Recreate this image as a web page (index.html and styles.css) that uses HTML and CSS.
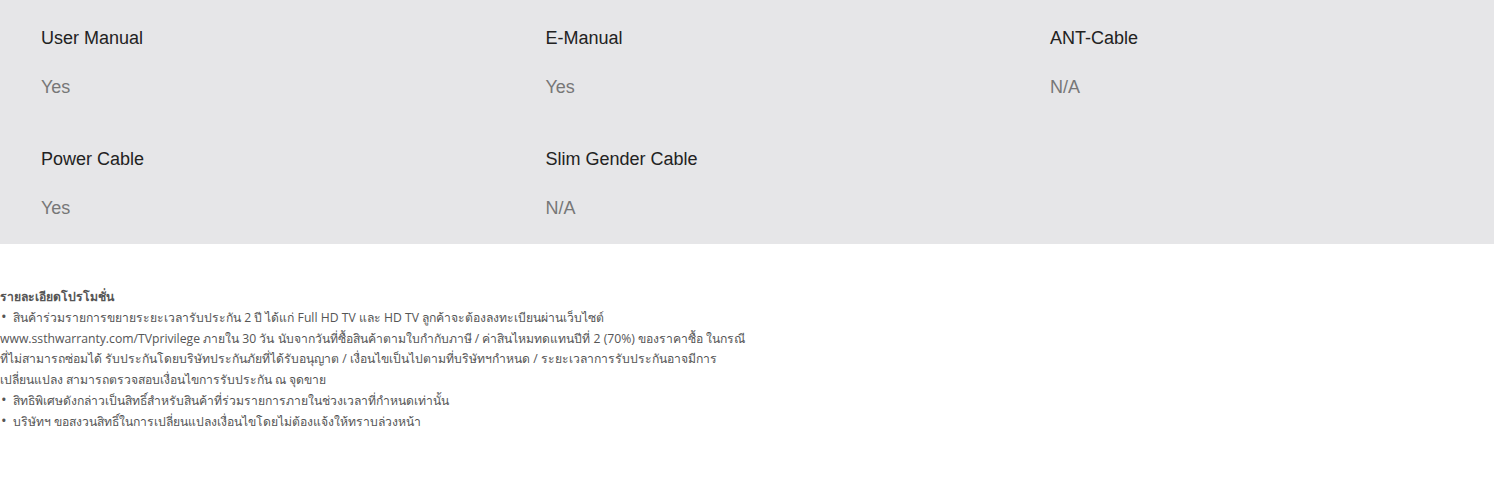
FILE: index.html
```html
<!DOCTYPE html>
<html lang="th">
<head>
    <meta charset="UTF-8">
    <meta name="viewport" content="width=device-width, initial-scale=1.0">
    <title>Specifications</title>
    <link rel="stylesheet" href="styles.css">
</head>
<body>
    <div class="specs">
        <div class="spec">
            <div class="spec-name">User Manual</div>
            <div class="spec-value">Yes</div>
        </div>
        <div class="spec">
            <div class="spec-name">E-Manual</div>
            <div class="spec-value">Yes</div>
        </div>
        <div class="spec">
            <div class="spec-name">ANT-Cable</div>
            <div class="spec-value">N/A</div>
        </div>
        <div class="spec">
            <div class="spec-name">Power Cable</div>
            <div class="spec-value">Yes</div>
        </div>
        <div class="spec">
            <div class="spec-name">Slim Gender Cable</div>
            <div class="spec-value">N/A</div>
        </div>
    </div>

    <div class="promo">
        <p class="promo-title">รายละเอียดโปรโมชั่น</p>
        <p><span class="dot">•</span>&nbsp; สินค้าร่วมรายการขยายระยะเวลารับประกัน 2 ปี ได้แก่ Full HD TV และ HD TV ลูกค้าจะต้องลงทะเบียนผ่านเว็บไซต์<br>
        www.ssthwarranty.com/TVprivilege ภายใน 30 วัน นับจากวันที่ซื้อสินค้าตามใบกำกับภาษี / ค่าสินไหมทดแทนปีที่ 2 (70%) ของราคาซื้อ ในกรณี<br>
        ที่ไม่สามารถซ่อมได้ รับประกันโดยบริษัทประกันภัยที่ได้รับอนุญาต / เงื่อนไขเป็นไปตามที่บริษัทฯกำหนด / ระยะเวลาการรับประกันอาจมีการ<br>
        เปลี่ยนแปลง สามารถตรวจสอบเงื่อนไขการรับประกัน ณ จุดขาย</p>
        <p><span class="dot">•</span>&nbsp; สิทธิพิเศษดังกล่าวเป็นสิทธิ์สำหรับสินค้าที่ร่วมรายการภายในช่วงเวลาที่กำหนดเท่านั้น</p>
        <p><span class="dot">•</span>&nbsp; บริษัทฯ ขอสงวนสิทธิ์ในการเปลี่ยนแปลงเงื่อนไขโดยไม่ต้องแจ้งให้ทราบล่วงหน้า</p>
    </div>
</body>
</html>
```

FILE: styles.css
```css
body {
    margin: 0;
    background: #fff;
    font-family: "Liberation Sans", Arial, sans-serif;
}

.specs {
    display: grid;
    grid-template-columns: repeat(3, 504.5px);
    row-gap: 45px;
    background-color: #e6e6e8;
    padding: 25px 0 22px 41px;
}

.spec-name {
    font-size: 18px;
    line-height: 27px;
    color: #222;
    margin-bottom: 22px;
}

.spec-value {
    font-size: 18px;
    line-height: 27px;
    color: #777;
}

.promo {
    margin-top: 43px;
    font-family: "Open Sans", "Noto Sans", sans-serif;
    font-size: 12.2px;
    line-height: 20.8px;
    color: #555;
}

.promo p {
    margin: 0;
}

.promo-title {
    font-weight: bold;
}

.dot {
    font-size: 15px;
    line-height: 0;
    padding-left: 1px;
}
```
